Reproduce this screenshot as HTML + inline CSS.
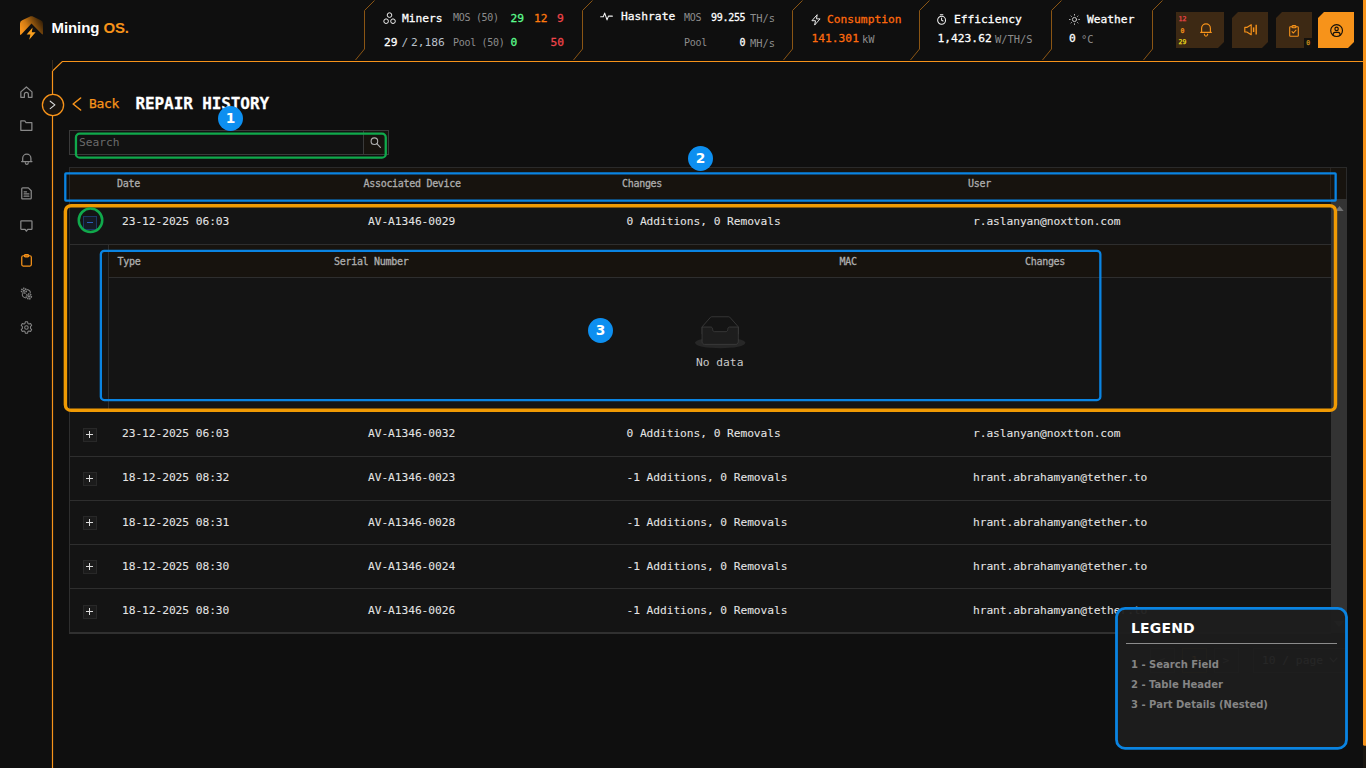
<!DOCTYPE html>
<html lang="en">
<head>
<meta charset="utf-8">
<title>Mining OS - Repair History</title>
<style>
*{box-sizing:border-box;margin:0;padding:0}
html,body{width:1366px;height:768px;overflow:hidden;background:#0f0f0f}
body{position:relative;font-family:"DejaVu Sans Mono","Liberation Mono",monospace;font-size:11.25px;color:#fff}
.abs{position:absolute}
.t{position:absolute;white-space:nowrap;line-height:14px;height:14px;font-size:11.25px}
.s{font-size:10px;letter-spacing:-0.3px}
.u{font-size:10.4px}
.b{-webkit-text-stroke:0.27px currentColor}
.gr{color:#8d8d8d}
.or{color:#f7931a}
svg{position:absolute;overflow:visible}
.div{stroke:#8a5514;stroke-width:1;fill:none}
.btn{position:absolute;top:12px;height:36px;width:36px;background:#3d2914;clip-path:polygon(6px 0,100% 0,100% 30px,30px 100%,0 100%,0 6px)}
.row{position:absolute;left:70px;width:1261px;height:44px;background:#141414;border-bottom:1px solid #2e2e2e}
.row .t{top:14px;color:#e4e4e4;letter-spacing:-0.07px;-webkit-text-stroke:0.06px currentColor}
.plus{position:absolute;left:13px;top:15px;width:14px;height:14px;border:1px solid #282828;background:#1b1b1b}
.plus:before{content:"";position:absolute;left:2px;top:5px;width:7px;height:1px;background:#dcdcdc}
.plus:after{content:"";position:absolute;left:5px;top:2px;width:1px;height:7px;background:#dcdcdc}
.th{position:absolute;white-space:nowrap;line-height:12px;height:12px;font-size:10px;letter-spacing:-0.3px;color:#adadad;-webkit-text-stroke:0.3px currentColor}
.badge{position:absolute;width:25px;height:25px;border-radius:50%;background:#0d8ff0;color:#fff;font:bold 13.75px/25px "DejaVu Sans","Liberation Sans",sans-serif;text-align:center}
.ico{fill:none;stroke:#888;stroke-width:1.25;vector-effect:non-scaling-stroke;stroke-linecap:round;stroke-linejoin:round}
.r1 .t{top:15px}
</style>
</head>
<body>
<!-- HEADER -->
<div id="header" class="abs" style="left:0;top:0;width:1366px;height:62px">
<!-- logo -->
<svg style="left:20px;top:16px" width="23" height="24" viewBox="0 0 23 24">
<defs><linearGradient id="lg" x1="0.05" y1="0.7" x2="1" y2="0.25"><stop offset="0" stop-color="#f7931a"/><stop offset="0.3" stop-color="#d17b14"/><stop offset="0.65" stop-color="#7a480c"/><stop offset="1" stop-color="#2c1a07"/></linearGradient></defs>
<path d="M2.2 4.2 L10.6 0.3 Q11.5 0 12.4 0.3 L20.8 4.2 Q23 5.2 23 7.4 L23 17.5 Q23 19 21.8 18 L11.5 7.6 L1.2 18.6 Q0 19.6 0 18 L0 7.4 Q0 5.2 2.2 4.2 Z" fill="url(#lg)"/>
<path d="M12.6 11.4 L6.6 18.6 L10.4 18.6 L9.2 23.8 L15.6 16.2 L11.8 16.2 Z" fill="#f9a01f"/>
</svg>
<div class="abs" style="left:51.6px;top:18px;font:bold 15px/20px 'Liberation Sans',sans-serif;color:#fff;white-space:nowrap;letter-spacing:-0.1px">Mining <span style="color:#f7931a">OS.</span></div>

<!-- dividers -->
<svg style="left:0;top:0" width="1366" height="62" viewBox="0 0 1366 62">
<path class="div" d="M374.5 0.5 L364.5 10.5 V49 L355.5 60"/>
<path class="div" d="M592.5 0.5 L582.5 10.5 V49 L573.5 60"/>
<path class="div" d="M802.5 0.5 L792.5 10.5 V49 L783.5 60"/>
<path class="div" d="M929.5 0.5 L919.5 10.5 V49 L910.5 60"/>
<path class="div" d="M1061.5 0.5 L1051.5 10.5 V49 L1042.5 60"/>
<path class="div" d="M1162.5 0.5 L1152.5 10.5 V49 L1143.5 60"/>
</svg>

<!-- Miners -->
<svg style="left:383px;top:12px" width="13" height="13" viewBox="0 0 13 13"><g fill="none" stroke="#f2f2f2" stroke-width="1"><circle cx="6.5" cy="3.1" r="2.3"/><circle cx="3.1" cy="9.2" r="2.3"/><circle cx="10" cy="9.2" r="2.3"/></g></svg>
<div class="t b" style="left:402px;top:12px">Miners</div>
<div class="t s gr" style="left:453px;top:11px">MOS (50)</div>
<div class="t b" style="left:510.5px;top:12px;color:#5dfc8e">29</div>
<div class="t b" style="left:534px;top:12px;color:#ff7a0d">12</div>
<div class="t b" style="left:557px;top:12px;color:#f0454a">9</div>
<div class="t b" style="left:384px;top:36px">29</div>
<div class="t" style="left:401.5px;top:36px;color:#b9c0ca">/</div>
<div class="t" style="left:411px;top:36px;color:#b9c0ca">2,186</div>
<div class="t s gr" style="left:453px;top:36px">Pool (50)</div>
<div class="t b" style="left:510.5px;top:36px;color:#5dfc8e">0</div>
<div class="t b" style="left:550.5px;top:36px;color:#f0454a">50</div>

<!-- Hashrate -->
<svg style="left:600.3px;top:11.8px" width="13" height="9" viewBox="0 0 14 10"><path d="M0.5 5.2 H3.4 L5 1.2 L7.6 8.8 L9.2 4.6 H13.5" fill="none" stroke="#f2f2f2" stroke-width="1.2" stroke-linejoin="round" stroke-linecap="round"/></svg>
<div class="t b" style="left:621px;top:10px">Hashrate</div>
<div class="t s gr" style="left:684px;top:11px">MOS</div>
<div class="t s b" style="left:711px;top:11px">99.255</div>
<div class="t u gr" style="left:750px;top:11px">TH/s</div>
<div class="t s gr" style="left:684px;top:36px">Pool</div>
<div class="t s b" style="left:739.6px;top:36px">0</div>
<div class="t u gr" style="left:750px;top:36px">MH/s</div>

<!-- Consumption -->
<svg style="left:810.6px;top:13.6px" width="10" height="11.8" viewBox="0 0 11 13"><path d="M6.8 0.8 L1 7.4 H5 L4 12.2 L10 5.4 H6 Z" fill="none" stroke="#e8e8e8" stroke-width="1.1" stroke-linejoin="round"/></svg>
<div class="t b" style="left:827px;top:13px;color:#ff6a0d">Consumption</div>
<div class="t b" style="left:811.5px;top:32px;color:#ff6a0d">141.301</div>
<div class="t u gr" style="left:862px;top:32px">kW</div>

<!-- Efficiency -->
<svg style="left:937.3px;top:14.2px" width="9.2" height="11" viewBox="0 0 10 12"><g fill="none" stroke="#f2f2f2" stroke-width="1.1" stroke-linecap="round"><circle cx="5" cy="6.8" r="4.3"/><path d="M3.6 0.8 H6.4 M5 4.4 V6.8 L6.6 7.6"/></g></svg>
<div class="t b" style="left:954px;top:13px">Efficiency</div>
<div class="t b" style="left:937.5px;top:32px">1,423.62</div>
<div class="t u gr" style="left:995px;top:32px">W/TH/S</div>

<!-- Weather -->
<svg style="left:1069px;top:14px" width="11" height="11" viewBox="0 0 11 11"><g fill="none" stroke="#c4c4c4" stroke-width="1" stroke-linecap="round"><circle cx="5.5" cy="5.5" r="2.1"/><path d="M5.5 0.5 V1.2 M5.5 9.8 V10.5 M0.5 5.5 H1.2 M9.8 5.5 H10.5 M2 2 L2.4 2.4 M8.6 8.6 L9 9 M2 9 L2.4 8.6 M8.6 2.4 L9 2" stroke-dasharray="0.6 0.6"/></g></svg>
<div class="t b" style="left:1087px;top:13px">Weather</div>
<div class="t b" style="left:1069px;top:32px">0</div>
<div class="t u gr" style="left:1081px;top:32px">°C</div>

<!-- buttons -->
<div class="btn" style="left:1176px;width:48px;clip-path:polygon(0 0,100% 0,100% 30px,42px 100%,0 100%)"></div>
<div class="t" style="left:1178.6px;top:11.5px;font-size:6.5px;color:#f0454a;-webkit-text-stroke:0.25px currentColor">12</div>
<div class="t" style="left:1180.6px;top:23.5px;font-size:6.5px;color:#f7931a;-webkit-text-stroke:0.25px currentColor">0</div>
<div class="t" style="left:1178.6px;top:34.5px;font-size:6.5px;color:#e8d81c;-webkit-text-stroke:0.25px currentColor">29</div>
<svg style="left:1199.6px;top:23.4px" width="12" height="14" viewBox="0 0 12 14"><g fill="none" stroke="#f7931a" stroke-width="1.15" stroke-linecap="round" stroke-linejoin="round"><path d="M1.6 9.2 V5.2 A4.4 4.4 0 0 1 10.4 5.2 V9.2 M0.7 9.4 H11.3 M4.3 11.2 Q4.6 13.2 6 13.2 Q7.4 13.2 7.7 11.2"/></g></svg>
<div class="btn" style="left:1232px"></div>
<svg style="left:1243.5px;top:24.3px" width="13.5" height="11.4" viewBox="0 0 13.5 11.4"><g fill="none" stroke="#f7931a" stroke-width="1.15" stroke-linejoin="round" stroke-linecap="butt"><path d="M0.8 3.4 H2.8 L7.2 0.7 V10.7 L2.8 8 H0.8 Z"/><path d="M9.6 3.4 V8" stroke-width="1.5"/><path d="M12.2 0.8 V10.6" stroke-width="1.4"/></g></svg>
<div class="btn" style="left:1276px"></div>
<svg style="left:1288.6px;top:24.6px" width="10" height="12" viewBox="0 0 10 12"><g fill="none" stroke="#f7931a" stroke-width="1.1" stroke-linejoin="round" stroke-linecap="round"><rect x="0.7" y="1.8" width="8.6" height="9.5" rx="0.6"/><path d="M3 1.8 Q3 0.6 4 0.6 H6 Q7 0.6 7 1.8 Q7 2.8 6 2.8 H4 Q3 2.8 3 1.8 Z" fill="#7a4a12"/><path d="M3 6.6 L4.4 8 L7 5.2"/></g></svg>
<div class="abs" style="left:1304px;top:37.5px;width:8px;height:10.5px;background:#14110d"></div>
<div class="t" style="left:1306.3px;top:35.5px;font-size:6.5px;color:#c9901c;-webkit-text-stroke:0.25px currentColor">0</div>
<div class="btn" style="left:1318px;background:#f7931a"></div>
<svg style="left:1330px;top:24px" width="13.2" height="13.2" viewBox="0 0 13.2 13.2"><g fill="none" stroke="#15100a" stroke-width="1.15" stroke-linecap="round"><circle cx="6.6" cy="6.6" r="5.9"/><circle cx="6.6" cy="4.9" r="1.7"/><path d="M3 11 Q3.2 8.4 5 8.4 H8.2 Q10 8.4 10.2 11"/></g></svg>
</div>
<!-- SIDEBAR -->
<div id="sidebar">
<!-- home -->
<svg style="left:19.9px;top:86px" width="12.8" height="12.3" viewBox="0 0 14 13"><path class="ico" d="M0.9 6.2 L7 0.8 L13.1 6.2 V12.2 H9.2 V9 A2.2 2.2 0 0 0 4.8 9 V12.2 H0.9 Z"/></svg>
<!-- folder -->
<svg style="left:19.9px;top:120px" width="12.7" height="11.1" viewBox="0 0 14 12"><path class="ico" d="M0.9 0.8 H4.8 Q5.6 0.8 6 1.8 L6.6 2.8 H13.1 V11.2 H0.9 Z"/></svg>
<!-- bell -->
<svg style="left:20.5px;top:152.8px" width="11.6" height="12.6" viewBox="0 0 13 13"><path class="ico" d="M1.9 8.8 V5.4 A4.6 4.6 0 0 1 11.1 5.4 V8.8 M0.7 9 H12.3 M4.8 10.4 Q5 12.3 6.5 12.3 Q8 12.3 8.2 10.4"/></svg>
<!-- document -->
<svg style="left:20.8px;top:187px" width="11" height="12.8" viewBox="0 0 12 14"><path class="ico" d="M1.8 0.9 H8 L11.2 4.1 V12 Q11.2 13.1 10.2 13.1 H1.8 Q0.8 13.1 0.8 12 V2 Q0.8 0.9 1.8 0.9 Z M3.4 5.2 H6 M3.4 7.6 H8.6 M3.4 10 H8.6"/></svg>
<!-- comment -->
<svg style="left:19.9px;top:220px" width="12.8" height="12" viewBox="0 0 14 13"><path class="ico" d="M1.6 0.8 H12.4 Q13.1 0.8 13.1 1.5 V9.4 Q13.1 10.1 12.4 10.1 H8.4 L7 12.2 L5.6 10.1 H1.6 Q0.9 10.1 0.9 9.4 V1.5 Q0.9 0.8 1.6 0.8 Z"/></svg>
<!-- clipboard active -->
<svg style="left:20.9px;top:253.8px" width="11.1" height="12.9" viewBox="0 0 12 14"><g fill="none" stroke="#f7931a" stroke-width="1.35" stroke-linejoin="round"><rect x="0.8" y="1.9" width="10.4" height="11.2" rx="1.6"/><path d="M3.6 1.9 Q3.6 0.8 4.6 0.8 H7.4 Q8.4 0.8 8.4 1.9 Q8.4 3.1 7.4 3.1 H4.6 Q3.6 3.1 3.6 1.9 Z" fill="#b5670f"/></g></svg>
<!-- gears -->
<svg style="left:19.8px;top:286.6px" width="12.8" height="13.4" viewBox="0 0 14 14"><g fill="none" stroke="#858585" stroke-width="1.1"><circle cx="4.3" cy="3.9" r="2.6" stroke-dasharray="1.3 0.75" stroke-width="1.9"/><circle cx="4.3" cy="3.9" r="0.7"/><circle cx="9.7" cy="10" r="2.6" stroke-dasharray="1.3 0.75" stroke-width="1.9"/><circle cx="9.7" cy="10" r="0.7"/><path d="M7.4 2.4 Q12 3.2 11.2 6.8 M2.6 7.2 Q1.8 10.8 6.6 11.6"/></g></svg>
<!-- settings -->
<svg style="left:19.8px;top:320.9px" width="12.9" height="13" viewBox="0 0 14 14"><g fill="none" stroke="#858585" stroke-width="1.15" stroke-linejoin="round"><path d="M5.8 0.8 H8.2 L8.6 2.6 L9.8 3.3 L11.5 2.7 L12.7 4.8 L11.4 6 V8 L12.7 9.2 L11.5 11.3 L9.8 10.7 L8.6 11.4 L8.2 13.2 H5.8 L5.4 11.4 L4.2 10.7 L2.5 11.3 L1.3 9.2 L2.6 8 V6 L1.3 4.8 L2.5 2.7 L4.2 3.3 L5.4 2.6 Z"/><circle cx="7" cy="7" r="1.9"/></g></svg>
</div>
<!-- FRAME -->
<svg style="left:0;top:0" width="1366" height="768" viewBox="0 0 1366 768">
<path d="M52.5 768 V71 L62.3 61.5 H1363" fill="none" stroke="#f7931a" stroke-width="1.2"/>
<line x1="52.5" y1="60" x2="52.5" y2="70.5" stroke="#3a2a1a" stroke-width="1"/>
<rect x="1363" y="0" width="3" height="768" fill="#1a1611"/>
<rect x="1363" y="-3" width="6" height="748.8" rx="1.5" fill="#f7931a"/>
<circle cx="53" cy="105" r="10.6" fill="#19140f" stroke="#f7931a" stroke-width="1.3"/>
<path d="M50.2 101.2 L54.9 104.9 L50.2 108.6" fill="none" stroke="#dcdcdc" stroke-width="1.1" stroke-linecap="round" stroke-linejoin="round"/>
</svg>
<!-- CONTENT -->
<div id="content">
<svg style="left:72px;top:97px" width="10" height="14" viewBox="0 0 10 14"><path d="M8.6 1 L1.2 7 L8.6 13" fill="none" stroke="#f7931a" stroke-width="1.6" stroke-linecap="round" stroke-linejoin="round"/></svg>
<div class="t or" style="left:89px;top:95px;font-size:13px;line-height:18px;height:18px;letter-spacing:-0.3px;-webkit-text-stroke:0.25px currentColor">Back</div>
<div class="t b" style="left:135.5px;top:94px;font-size:16px;line-height:20px;height:20px;color:#fff;font-weight:bold;letter-spacing:-0.1px">REPAIR HISTORY</div>

<!-- search -->
<div class="abs" style="left:69px;top:130px;width:320px;height:25px;border:1px solid #3a3a3a;background:#121212"></div>
<div class="abs" style="left:363px;top:131px;width:25px;height:23px;background:#17130e;border-left:1px solid #3a3a3a"></div>
<div class="t" style="left:79px;top:136px;color:#6b6b6b">Search</div>
<svg style="left:370px;top:137px" width="12" height="12" viewBox="0 0 12 12"><g fill="none" stroke="#b0b0b0" stroke-width="1.1" stroke-linecap="round"><circle cx="4.4" cy="4.2" r="3.3"/><path d="M6.9 6.7 L10.4 10.3"/></g></svg>

<!-- table -->
<div class="abs" style="left:69px;top:167px;width:1278px;height:32px;background:#17130e;border:1px solid #2a2a2a;border-bottom:none"></div>
<div class="abs" style="left:1330px;top:168px;width:1px;height:31px;background:#2a2622"></div>
<div class="th" style="left:117px;top:177.5px">Date</div>
<div class="th" style="left:363.5px;top:177.5px">Associated Device</div>
<div class="th" style="left:622px;top:177.5px">Changes</div>
<div class="th" style="left:968px;top:177.5px">User</div>
<!-- table body container & scrollbar -->
<div class="abs" style="left:69px;top:199px;width:1px;height:434px;background:#2e2e2e"></div><div class="abs" style="left:70px;top:199px;width:1261px;height:2px;background:#141414"></div>
<div class="abs" style="left:1331px;top:199px;width:16px;height:434px;background:#333"></div>
<svg style="left:1334.5px;top:206px" width="9" height="5" viewBox="0 0 10 6"><path d="M0 6 L5 0 L10 6 Z" fill="#727272"/></svg>
<svg style="left:1334px;top:621px" width="10" height="6" viewBox="0 0 10 6"><path d="M0 0 L5 6 L10 0 Z" fill="#6a6a6a"/></svg>

<!-- row 1 (expanded) -->
<div class="row" style="top:201px">
  <div class="abs" style="left:13px;top:15px;width:14px;height:14px;border:1px solid #1c3766;background:#151a26"></div>
  <div class="abs" style="left:17px;top:20.5px;width:6px;height:1.5px;background:#2a5db8"></div>
  <div class="t" style="left:52px">23-12-2025 06:03</div>
  <div class="t" style="left:298px">AV-A1346-0029</div>
  <div class="t" style="left:556.5px">0 Additions, 0 Removals</div>
  <div class="t" style="left:903px">r.aslanyan@noxtton.com</div>
</div>
<!-- expanded -->
<div class="abs" style="left:70px;top:245px;width:1261px;height:168px;background:#141414"></div>
<div class="abs" style="left:108px;top:245px;width:1px;height:165px;background:#2e2e2e"></div>
<div class="abs" style="left:109px;top:245px;width:1222px;height:33px;background:#17130e;border-bottom:1px solid #2e2e2e"></div>
<div class="th" style="left:117.5px;top:255.5px">Type</div>
<div class="th" style="left:334px;top:255.5px">Serial Number</div>
<div class="th" style="left:839.5px;top:255.5px">MAC</div>
<div class="th" style="left:1025px;top:255.5px">Changes</div>
<svg style="left:694.5px;top:316px" width="50.4" height="32.3" viewBox="0 0 64 41"><g transform="translate(0 1)" fill="none" fill-rule="evenodd"><ellipse fill="#272727" cx="32" cy="33" rx="32" ry="7"/><g fill-rule="nonzero" stroke="#3e3e3e"><path d="M55 12.76L44.854 1.258C44.367.474 43.656 0 42.907 0H21.093c-.749 0-1.46.474-1.947 1.257L9 12.761V22h46v-9.24z"/><path d="M41.613 15.931c0-1.605.994-2.93 2.227-2.931H55v18.137C55 33.26 53.68 35 52.05 35h-40.1C10.32 35 9 33.259 9 31.137V13h11.16c1.233 0 2.227 1.323 2.227 2.928v.022c0 1.605 1.005 2.901 2.237 2.901h14.752c1.232 0 2.237-1.308 2.237-2.913v-.007z" fill="#1d1d1d"/></g></g></svg>
<div class="t" style="left:696px;top:356px;color:#c9c9c9">No data</div>

<!-- rows -->
<div class="row" style="top:413px"><div class="plus"></div><div class="t" style="left:52px">23-12-2025 06:03</div><div class="t" style="left:298px">AV-A1346-0032</div><div class="t" style="left:556.5px">0 Additions, 0 Removals</div><div class="t" style="left:903px">r.aslanyan@noxtton.com</div></div>
<div class="row" style="top:457px"><div class="plus"></div><div class="t" style="left:52px">18-12-2025 08:32</div><div class="t" style="left:298px">AV-A1346-0023</div><div class="t" style="left:556.5px">-1 Additions, 0 Removals</div><div class="t" style="left:903px">hrant.abrahamyan@tether.to</div></div>
<div class="row r1" style="top:501px"><div class="plus"></div><div class="t" style="left:52px">18-12-2025 08:31</div><div class="t" style="left:298px">AV-A1346-0028</div><div class="t" style="left:556.5px">-1 Additions, 0 Removals</div><div class="t" style="left:903px">hrant.abrahamyan@tether.to</div></div>
<div class="row r1" style="top:545px"><div class="plus"></div><div class="t" style="left:52px">18-12-2025 08:30</div><div class="t" style="left:298px">AV-A1346-0024</div><div class="t" style="left:556.5px">-1 Additions, 0 Removals</div><div class="t" style="left:903px">hrant.abrahamyan@tether.to</div></div>
<div class="row r1" style="top:589px;height:45px"><div class="plus" style="top:16px"></div><div class="t" style="left:52px">18-12-2025 08:30</div><div class="t" style="left:298px">AV-A1346-0026</div><div class="t" style="left:556.5px">-1 Additions, 0 Removals</div><div class="t" style="left:903px">hrant.abrahamyan@tether.to</div></div>
<div class="abs" style="left:69px;top:632px;width:1262px;height:2px;background:#303030"></div>

<!-- pagination (sits behind legend) -->
<div class="abs" style="left:1150px;top:648px;width:25px;height:25px;border:1px solid #2a2a2a"></div>
<div class="abs" style="left:1182px;top:648px;width:25px;height:25px;border:1px solid #5a3810"></div>
<div class="t or" style="left:1191px;top:654px">1</div>
<div class="abs" style="left:1214px;top:648px;width:25px;height:25px;border:1px solid #2a2a2a"></div>
<div class="t gr" style="left:1158.5px;top:654px">&lt;</div>
<div class="t gr" style="left:1222.5px;top:654px">&gt;</div>
<div class="abs" style="left:1253px;top:648px;width:94px;height:25px;border:1px solid #2a2a2a"></div>
<div class="t" style="left:1262px;top:654px;color:#bdbdbd">10 / page</div>
<svg style="left:1329px;top:657px" width="9" height="6" viewBox="0 0 9 6"><path d="M0.8 0.8 L4.5 4.8 L8.2 0.8" fill="none" stroke="#8d8d8d" stroke-width="1.1"/></svg>
</div>
<!-- ANNOTATIONS -->
<div id="annot">
<svg style="left:0;top:0" width="1366" height="768" viewBox="0 0 1366 768">
<g fill="none">
<rect x="75.95" y="133.65" width="309.8" height="24" rx="3.75" stroke="#10a94c" stroke-width="2.3"/>
<rect x="65.3" y="173.35" width="1270.35" height="27.2" rx="0.6" stroke="#0a84e2" stroke-width="2.3"/>
<rect x="65.4" y="205.7" width="1270.1" height="204.6" rx="5.6" stroke="#f09a04" stroke-width="3.45"/>
<rect x="100.85" y="250.85" width="999.5" height="149.2" rx="3.4" stroke="#0a84e2" stroke-width="2.3"/>
<circle cx="90.5" cy="220.3" r="11.75" stroke="#10a94c" stroke-width="2.5"/>
</g>
</svg>
<div class="badge" style="left:218px;top:106px">1</div>
<div class="badge" style="left:688px;top:145.5px">2</div>
<div class="badge" style="left:588px;top:318px">3</div>
<!-- legend -->
<svg style="left:0;top:0" width="1366" height="768" viewBox="0 0 1366 768">
<rect x="1116.5" y="608.4" width="230" height="140" rx="8.6" fill="rgba(30,30,30,0.95)" stroke="#0a84e2" stroke-width="2.8"/>
</svg>
<div class="abs" style="left:1131px;top:619px;font:bold 14px/18px 'DejaVu Sans','Liberation Sans',sans-serif;color:#fff;white-space:nowrap;letter-spacing:0.15px">LEGEND</div>
<div class="abs" style="left:1126px;top:643px;width:211px;height:1px;background:#8c8c8c"></div>
<div class="abs" style="left:1131px;top:657px;font:bold 10px/15px 'DejaVu Sans','Liberation Sans',sans-serif;color:#858585;white-space:nowrap">1 - Search Field</div>
<div class="abs" style="left:1131px;top:677px;font:bold 10px/15px 'DejaVu Sans','Liberation Sans',sans-serif;color:#858585;white-space:nowrap">2 - Table Header</div>
<div class="abs" style="left:1131px;top:697px;font:bold 10px/15px 'DejaVu Sans','Liberation Sans',sans-serif;color:#858585;white-space:nowrap">3 - Part Details (Nested)</div>
</div>

</body>
</html>
